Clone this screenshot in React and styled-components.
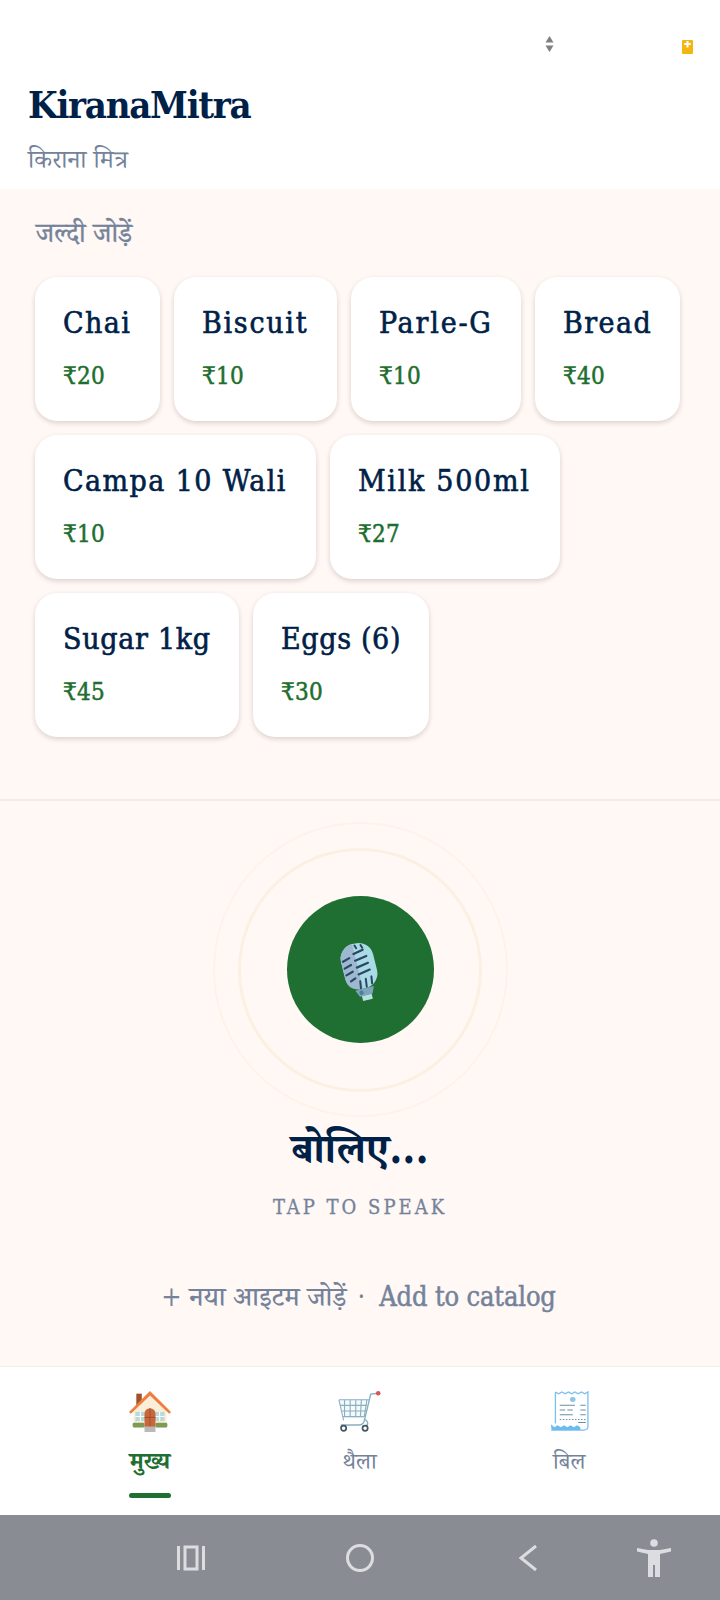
import React from 'react'
import styled, { createGlobalStyle } from 'styled-components'

const SLAB = `"DejaVu Serif Condensed", "DejaVu Serif", "Noto Serif Devanagari", "Noto Sans Devanagari", "Noto Sans", serif`

const quickItems = [
  [
    { name: 'Chai', price: '₹20', width: 125, tracking: 1.4 },
    { name: 'Biscuit', price: '₹10', width: 163, tracking: 1.7 },
    { name: 'Parle-G', price: '₹10', width: 170, tracking: 1.8 },
    { name: 'Bread', price: '₹40', width: 145, tracking: 1.4 },
  ],
  [
    { name: 'Campa 10 Wali', price: '₹10', width: 281, tracking: 1.4 },
    { name: 'Milk 500ml', price: '₹27', width: 230, tracking: 1.7 },
  ],
  [
    { name: 'Sugar 1kg', price: '₹45', width: 204, tracking: 0.7 },
    { name: 'Eggs (6)', price: '₹30', width: 176, tracking: 0.65 },
  ],
]

const HouseIcon = () => (
  <svg width="44" height="42" viewBox="0 0 46 46">
    <rect x="8" y="4" width="6" height="13" fill="#a0522d" />
    <path d="M5 20L23 5l18 15v21H5z" fill="#fbeed9" />
    <path d="M23 1L0 24l2 2L23 6l21 20 2-2z" fill="#ef7d3c" />
    <rect x="7" y="24" width="11" height="10" fill="#bcd9da" />
    <rect x="28" y="24" width="11" height="10" fill="#bcd9da" />
    <path d="M12.500 24v10M7 29h11M33.500 24v10M28 29h11" stroke="#fff" strokeWidth="1.200" />
    <path d="M17 41V26a6 6 0 0 1 12 0v15z" fill="#c9673c" />
    <path d="M23 20v21M17 30h12" stroke="#a04d2b" strokeWidth="1" />
    <rect x="4" y="36" width="13" height="5" rx="1.500" fill="#7f9a52" />
    <rect x="29" y="36" width="13" height="5" rx="1.500" fill="#7f9a52" />
    <rect x="17" y="40" width="12" height="6" fill="#b9b9b9" />
  </svg>
)

const CartIcon = () => (
  <svg width="43" height="42" viewBox="0 0 46 44" fill="none">
    <path d="M1 10h31l-4 20H8z" fill="#f4f9fb" />
    <path
      d="M1 10h32M2 16h29M3 22h27M5 28h23M7 10v18M13 10v18M19 10v18M25 10l-1 18M31 10l-3 18M1 10l5 22"
      stroke="#8bb0c2"
      strokeWidth="1.200"
    />
    <path d="M43 3l-8 1-7 29c-1 3-3 4-6 4H3" stroke="#8bb0c2" strokeWidth="1.500" />
    <path d="M28 31c4 1 5 5 2 7" stroke="#8bb0c2" strokeWidth="1.500" />
    <circle cx="43" cy="3" r="2.400" fill="#d9534f" />
    <circle cx="6" cy="40.500" r="2.800" fill="#fff" stroke="#44565f" strokeWidth="1.800" />
    <circle cx="29" cy="40.500" r="2.800" fill="#fff" stroke="#44565f" strokeWidth="1.800" />
  </svg>
)

const ReceiptIcon = () => (
  <svg width="39" height="42" viewBox="0 0 36 44" fill="none" preserveAspectRatio="none">
    <path
      d="M5 2l3 2 3-2 3 2 3-2 3 2 3-2 3 2 3-2 3 2 3-2v36c0 3-2 4-4 4H1"
      fill="#fff"
      stroke="#7cc0ea"
      strokeWidth="1.200"
    />
    <path d="M5 2v33" stroke="#7cc0ea" strokeWidth="1.200" />
    <path d="M1 36l3 3 3-2 3 2 3-2 3 2 3-2 3 2 3-2 3 2v3H3c-1 0-2-1-2-4z" fill="#6cbcf0" />
    <circle cx="21" cy="10" r="2.600" fill="#8cc6e8" />
    <path
      d="M9 16h14M28 16h5M9 21h5M16 21h5M28 21h5M9 26h12M28 26h5M26 34h7"
      stroke="#6a8ea3"
      strokeWidth="1.100"
    />
    <path d="M9 31h24" stroke="#6a8ea3" strokeWidth="1.100" strokeDasharray="1.400 1.400" />
  </svg>
)

const MicIcon = () => (
  <svg width="50" height="66" viewBox="0 0 50 66" fill="none">
    <g transform="translate(3 5) rotate(-14 22 30)">
      <rect x="6" y="1" width="33" height="46" rx="15" fill="#a8dbe3" />
      <path d="M6 16A15 15 0 0 1 21 1v46c-9 0-15-5-15-13z" fill="#9cb9cf" />
      <path
        d="M8 16l7-2M8 23l7-2M8 30l7-2M11 37l5-2M20 11l10-2M20 18l12-2M20 25l12-2M20 32l12-2"
        stroke="#2f4568"
        strokeWidth="2.200"
        strokeLinecap="round"
      />
      <path d="M23 3l1 3M29 4l1 3M19 46l1-7M25 46l1-8M31 44l1-7" stroke="#2f4568" strokeWidth="2" strokeLinecap="round" />
      <path d="M13 47h19l-3 7H16z" fill="#7fa5bb" />
      <circle cx="18.500" cy="50.500" r="2.200" fill="#4c7ea0" />
      <rect x="18" y="54" width="10" height="5" fill="#b7e0e4" />
    </g>
  </svg>
)

export default function App() {
  return (
    <>
      <GlobalStyle />
      <Screen>
        <Header>
          <StatusBar>
            <SignalArrows>
              <svg width="9" height="16" viewBox="0 0 9 16">
                <path d="M4.500 0l4 6.500H.5zM4.500 16l-4-6.500h8z" fill="#808080" />
              </svg>
            </SignalArrows>
            <Battery>
              <svg width="11" height="14" viewBox="0 0 11 14">
                <rect width="11" height="14" rx="1" fill="#f5b50f" />
                <path d="M4.500 1h2v2h2.300v2H6.500v2.500h-2V5H2.200V3h2.300z" fill="#fff" />
              </svg>
            </Battery>
          </StatusBar>
          <Brand>KiranaMitra</Brand>
          <Tagline>किराना मित्र</Tagline>
        </Header>
        <Main>
          <QuickSection>
            <SectionLabel>जल्दी जोड़ें</SectionLabel>
            <CardRows>
              {quickItems.map((row, i) => (
                <CardRow key={i}>
                  {row.map((item) => (
                    <ItemCard key={item.name} $width={item.width}>
                      <ItemName $tracking={item.tracking}>{item.name}</ItemName>
                      <ItemPrice>{item.price}</ItemPrice>
                    </ItemCard>
                  ))}
                </CardRow>
              ))}
            </CardRows>
          </QuickSection>
          <VoiceSection>
            <OuterRing>
              <InnerRing>
                <MicButton>
                  <MicIcon />
                </MicButton>
              </InnerRing>
            </OuterRing>
            <SpeakTitle>बोलिए...</SpeakTitle>
            <SpeakHint>TAP TO SPEAK</SpeakHint>
            <AddLink>
              + नया आइटम जोड़ें<Dot>·</Dot><CatalogText>Add to catalog</CatalogText>
            </AddLink>
          </VoiceSection>
        </Main>
        <BottomNav>
          <NavItem>
            <NavIcon><HouseIcon /></NavIcon>
            <NavLabel $active>मुख्य</NavLabel>
            <ActiveBar />
          </NavItem>
          <NavItem>
            <NavIcon><CartIcon /></NavIcon>
            <NavLabel>थैला</NavLabel>
          </NavItem>
          <NavItem>
            <NavIcon><ReceiptIcon /></NavIcon>
            <NavLabel>बिल</NavLabel>
          </NavItem>
        </BottomNav>
        <SystemBar>
          <SysSlot>
            <svg width="28" height="26" viewBox="0 0 28 26" fill="none" stroke="#dcdde0" strokeWidth="3">
              <path d="M1.500 1v24M26.500 1v24" />
              <rect x="8" y="2" width="12" height="22" />
            </svg>
          </SysSlot>
          <SysSlot>
            <svg width="28" height="28" viewBox="0 0 28 28" fill="none" stroke="#dcdde0" strokeWidth="3">
              <circle cx="14" cy="14" r="12.500" />
            </svg>
          </SysSlot>
          <SysSlot>
            <svg width="20" height="28" viewBox="0 0 20 28" fill="none" stroke="#dcdde0" strokeWidth="3">
              <path d="M18 2L3 14l15 12" />
            </svg>
          </SysSlot>
          <SysSlot>
            <svg width="34" height="38" viewBox="0 0 34 38" fill="#dcdde0">
              <circle cx="17" cy="4" r="3.800" />
              <path d="M0 9l11 2h12l11-2v3.500l-11 2.500v23h-5V26h-2v12h-5V15L0 12.500z" />
            </svg>
          </SysSlot>
        </SystemBar>
      </Screen>
    </>
  )
}

const GlobalStyle = createGlobalStyle`
  html, body {
    margin: 0;
    padding: 0;
    background: #fff;
  }
`

const Screen = styled.div`
  width: 720px;
  height: 1600px;
  display: flex;
  flex-direction: column;
  overflow: hidden;
  font-family: ${SLAB};
  color: #002147;
`

const Header = styled.header`
  height: 189px;
  flex-shrink: 0;
  background: #fff;
  padding: 0 28px;
  box-sizing: border-box;
`

const StatusBar = styled.div`
  height: 81px;
  display: flex;
  justify-content: flex-end;
  align-items: flex-start;
`

const SignalArrows = styled.div`
  margin: 36px 128px 0 0;
`

const Battery = styled.div`
  margin: 39px -1px 0 0;
`

const Brand = styled.h1`
  margin: 0;
  font-size: 38px;
  line-height: 48px;
  font-weight: 700;
  letter-spacing: -1.3px;
  color: #002147;
`

const Tagline = styled.div`
  margin-top: 14px;
  font-size: 25px;
  line-height: 34px;
  color: #74829a;
`

const Main = styled.main`
  flex: 1;
  display: flex;
  flex-direction: column;
  background: #fff8f5;
`

const QuickSection = styled.section`
  height: 612px;
  flex-shrink: 0;
  box-sizing: border-box;
  padding: 28px 35px 0;
  border-bottom: 2px solid #f3ebe7;
`

const SectionLabel = styled.div`
  margin-left: 1px;
  font-size: 27px;
  line-height: 32px;
  -webkit-text-stroke: 0.4px #74829a;
  color: #74829a;
`

const CardRows = styled.div`
  margin-top: 28px;
  display: flex;
  flex-direction: column;
  gap: 14px;
`

const CardRow = styled.div`
  display: flex;
  gap: 14px;
`

const ItemCard = styled.div`
  width: ${(p) => p.$width}px;
  height: 144px;
  box-sizing: border-box;
  padding: 26px 0 0 28px;
  background: #fff;
  border-radius: 22px;
  box-shadow: 0 2px 5px rgba(80, 50, 40, 0.2);
`

const ItemName = styled.div`
  font-size: 30px;
  line-height: 40px;
  letter-spacing: ${(p) => p.$tracking}px;
  -webkit-text-stroke: 0.6px #002147;
  color: #002147;
  white-space: nowrap;
`

const ItemPrice = styled.div`
  margin-top: 17px;
  font-size: 24px;
  line-height: 32px;
  letter-spacing: 0.3px;
  -webkit-text-stroke: 0.5px #1e6e2e;
  color: #1e6e2e;
`

const VoiceSection = styled.section`
  flex: 1;
  display: flex;
  flex-direction: column;
  align-items: center;
  padding-top: 21px;
`

const OuterRing = styled.div`
  width: 295px;
  height: 295px;
  box-sizing: border-box;
  border-radius: 50%;
  border: 2px solid #fdf3ea;
  display: flex;
  align-items: center;
  justify-content: center;
`

const InnerRing = styled.div`
  width: 244px;
  height: 244px;
  box-sizing: border-box;
  border-radius: 50%;
  border: 3px solid #fbf0e2;
  display: flex;
  align-items: center;
  justify-content: center;
`

const MicButton = styled.div`
  width: 147px;
  height: 147px;
  border-radius: 50%;
  background: #1f6f32;
  display: flex;
  align-items: center;
  justify-content: center;
`

const SpeakTitle = styled.div`
  margin-top: 3px;
  font-size: 42px;
  line-height: 58px;
  font-weight: 700;
  color: #002147;
`

const SpeakHint = styled.div`
  margin-top: 15px;
  font-size: 20px;
  line-height: 28px;
  letter-spacing: 3px;
  -webkit-text-stroke: 0.3px #74829a;
  color: #74829a;
`

const AddLink = styled.div`
  margin-top: 57px;
  padding-right: 3px;
  font-size: 27px;
  line-height: 38px;
  font-weight: 500;
  color: #74829a;
`

const Dot = styled.span`
  margin: 0 14px 0 11px;
`

const CatalogText = styled.span`
  letter-spacing: -0.15px;
  -webkit-text-stroke: 0.5px #74829a;
`

const BottomNav = styled.nav`
  height: 149px;
  flex-shrink: 0;
  box-sizing: border-box;
  background: #fff;
  border-top: 1px solid #f0eeee;
  display: grid;
  grid-template-columns: repeat(3, 1fr);
  padding: 23px 46px 0 45px;
`

const NavItem = styled.div`
  display: flex;
  flex-direction: column;
  align-items: center;
`

const NavIcon = styled.div`
  height: 42px;
  display: flex;
  align-items: center;
`

const NavLabel = styled.div`
  margin-top: 13px;
  font-size: ${(p) => (p.$active ? 24 : 23)}px;
  line-height: 32px;
  font-weight: ${(p) => (p.$active ? 700 : 400)};
  color: ${(p) => (p.$active ? '#1f6f32' : '#74829a')};
`

const ActiveBar = styled.div`
  width: 42px;
  height: 5px;
  margin-top: 16px;
  border-radius: 3px;
  background: #1f6f32;
`

const SystemBar = styled.div`
  height: 85px;
  flex-shrink: 0;
  background: #8a8c94;
  display: grid;
  grid-template-columns: 205px 169px 164px 133px;
  align-items: center;
  justify-items: end;
`

const SysSlot = styled.div`
  display: flex;
  align-items: center;
`
